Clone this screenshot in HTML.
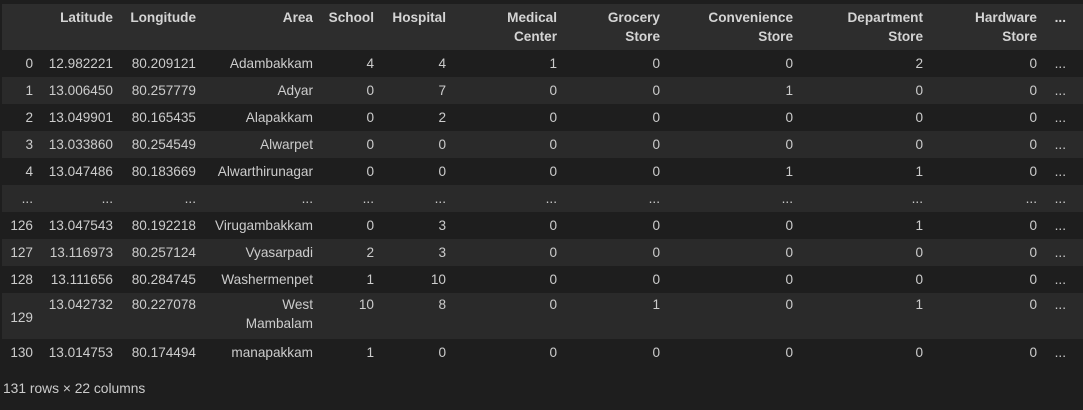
<!DOCTYPE html>
<html><head><meta charset="utf-8"><style>
body{margin:0;background:#1e1e1e;width:1083px;height:410px;overflow:hidden;font-family:"Liberation Sans",sans-serif;font-size:13.6px;color:#cccccc;}
.r{position:absolute;left:2px;width:1081px;}
.l{background:#2a2a2a}
.h{background:#2d2d2d;font-weight:bold;color:#d4d4d4}
.c{position:absolute;text-align:right;white-space:nowrap;line-height:19px}
.f{position:absolute;left:3px;top:381px;font-size:13.8px}
</style></head><body>
<div class="f">131 rows × 22 columns</div>
<script>
var R=[33,113,196,313,374,446,557,660,793,923,1037,1066];
function row(top,h,cls,cells,valTop,idxTop){
 var d=document.createElement('div');d.className='r '+cls;d.style.top=top+'px';d.style.height=h+'px';
 cells.forEach(function(t,i){var s=document.createElement('div');s.className='c';
  s.style.right=(1081-(R[i]-2))+'px';s.style.top=((i==0&&idxTop!=null)?idxTop:valTop)+'px';
  s.innerHTML=t;d.appendChild(s);});
 document.body.appendChild(d);}
row(4,46,'h',['','Latitude','Longitude','Area','School','Hospital','Medical<br>Center','Grocery<br>Store','Convenience<br>Store','Department<br>Store','Hardware<br>Store','...'],4);
var data=[
['0','12.982221','80.209121','Adambakkam','4','4','1','0','0','2','0','...'],
['1','13.006450','80.257779','Adyar','0','7','0','0','1','0','0','...'],
['2','13.049901','80.165435','Alapakkam','0','2','0','0','0','0','0','...'],
['3','13.033860','80.254549','Alwarpet','0','0','0','0','0','0','0','...'],
['4','13.047486','80.183669','Alwarthirunagar','0','0','0','0','1','1','0','...'],
['...','...','...','...','...','...','...','...','...','...','...','...'],
['126','13.047543','80.192218','Virugambakkam','0','3','0','0','0','1','0','...'],
['127','13.116973','80.257124','Vyasarpadi','2','3','0','0','0','0','0','...'],
['128','13.111656','80.284745','Washermenpet','1','10','0','0','0','0','0','...']];
var y=50;
data.forEach(function(d,i){row(y,27,i%2?'l':'',d,4);y+=27;});
row(293,46,'l',['129','13.042732','80.227078','West<br>Mambalam','10','8','0','1','0','1','0','...'],2,15);
row(339,27,'',['130','13.014753','80.174494','manapakkam','1','0','0','0','0','0','0','...'],4);
</script>
</body></html>
